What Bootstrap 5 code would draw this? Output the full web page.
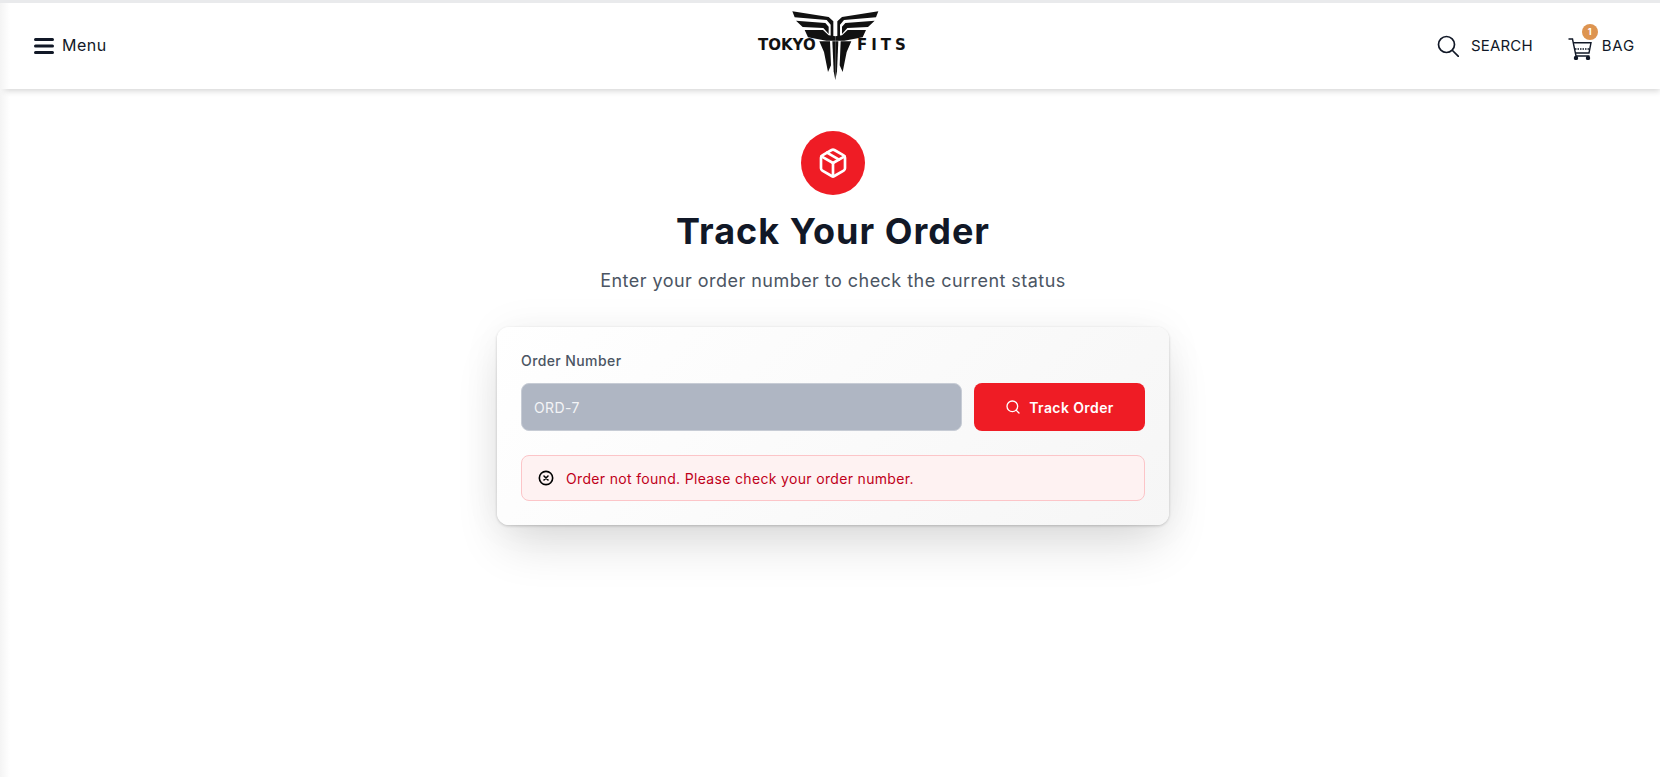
<!DOCTYPE html>
<html lang="en">
<head>
<meta charset="utf-8"/>
<meta content="width=device-width, initial-scale=1.0" name="viewport"/>
<title>Track Your Order</title>
<link href="https://cdn.jsdelivr.net/npm/bootstrap@5.3.0/dist/css/bootstrap.min.css" rel="stylesheet"/>
<style>
  body { font-family: Inter, "Open Sans", sans-serif; background: #fff; color: #111827; min-height: 777px; overflow: hidden; border-top: 3px solid #e9eaec; }
  body::before { content: ""; position: fixed; top: 3px; left: 0; bottom: 0; width: 10px; background: linear-gradient(to right, #f4f4f4, rgba(255,255,255,0)); z-index: 5; pointer-events: none; }
  .top-bar { height: 86px; padding: 0 25px 0 34px; background: #fff; box-shadow: 0 2px 6px rgba(0,0,0,.17); position: relative; }
  .top-side { width: 400px; }
  .top-link { font-size: 15px; letter-spacing: .15px; color: #111827; text-decoration: none; }
  .menu-link { font-size: 16px; letter-spacing: .5px; margin-top: -2px; }
  .bag-link { letter-spacing: .8px; }
  .cart-wrap { position: relative; width: 24px; height: 22px; margin: 0 10px 0 35px; }
  .cart-count { position: absolute; top: -11px; left: 14px; width: 16px; height: 16px; border-radius: 50%; background: #dd9450; color: #fff; font-size: 9px; font-weight: 700; line-height: 16px; text-align: center; }
  .logo-box { position: relative; width: 153px; height: 76px; }
  .logo-mark { position: absolute; top: 0; left: 30px; }
  .logo-word { position: absolute; top: 29px; font-family: "DejaVu Sans", sans-serif; font-weight: 700; font-size: 15px; line-height: 16px; color: #111; }
  .word-left { left: 0; }
  .word-right { left: 99px; letter-spacing: 4px; }
  .main-col { padding: 42px 0 0 6px; }
  .icon-disc { width: 64px; height: 64px; background: #ef1c25; }
  .page-title { font-size: 36px; font-weight: 700; line-height: 40px; letter-spacing: 1px; color: #111827; margin: 16px 0 0; }
  .page-sub { font-size: 18px; line-height: 28px; letter-spacing: .46px; color: #4b5563; margin: 16px 0 0; }
  .track-card { width: 672px; margin-top: 32px; padding: 24px; border-radius: 12px; background: linear-gradient(135deg, #fff, #f6f6f6); box-shadow: 0 25px 50px -8px rgba(0,0,0,.14), 0 0 40px rgba(0,0,0,.05), 0 1px 3px rgba(0,0,0,.2); }
  .field-label { font-size: 14px; line-height: 20px; letter-spacing: .4px; font-weight: 500; color: #4b5563; margin-bottom: 12px; display: block; }
  .track-row { gap: 12px; }
  .order-input, .order-input:disabled { height: 48px; min-width: 0; background: #afb6c3; border: 1px solid #c7ccd5; border-radius: 8px; color: #f3f4f6; font-size: 14px; letter-spacing: .4px; padding: 0 12px; }
  .btn-track, .btn-track:hover { width: 171px; height: 48px; background: #ef1c25; color: #fff; border: 0; border-radius: 8px; font-size: 14px; font-weight: 600; letter-spacing: .4px; }
  .not-found { height: 46px; margin-top: 24px; padding: 0 16px; gap: 12px; border: 1px solid #fcc5c8; border-radius: 8px; background: #fef2f2; color: #c0001a; font-size: 14px; letter-spacing: .33px; }
</style>
</head>
<body>
<header class="top-bar d-flex align-items-center justify-content-between">
  <div class="top-side d-flex align-items-center gap-2">
    <svg width="20" height="18" viewBox="0 0 20 18"><path d="M1.500 2.500h17M1.500 9h17M1.500 15.500h17" stroke="#111827" stroke-width="3" stroke-linecap="round"/></svg>
    <a class="top-link menu-link" href="#">Menu</a>
  </div>
  <div class="logo-box">
    <svg class="logo-mark" width="94" height="76" viewBox="0 0 282 228">
      <g id="wingHalf" fill="#111">
        <path d="M13 10L122 27 136 40V86L128 84V50L116 36 20 28Z"/>
        <path d="M24 38L112 45 122 56V78L106 60 44 57Z"/>
        <path d="M50 66L105 66 122 82 142 85V98H115L60 88Z"/>
        <path d="M94 100H126L129 172 120 192 108 132Z"/>
        <path d="M133 100H142V216L137 190Z"/>
      </g>
      <use href="#wingHalf" transform="translate(284,0) scale(-1,1)"/>
    </svg>
    <span class="logo-word word-left">TOKYO</span>
    <span class="logo-word word-right">FITS</span>
  </div>
  <div class="top-side d-flex align-items-center justify-content-end">
    <svg width="22" height="22" viewBox="0 0 22 22" fill="none" stroke="#111827" stroke-width="1.700" stroke-linecap="round"><circle cx="9.500" cy="9.500" r="8"/><path d="M15.500 15.500L21.500 21.500"/></svg>
    <a class="top-link ms-2 ps-1" href="#">SEARCH</a>
    <div class="cart-wrap">
      <svg width="24" height="22" viewBox="0 0 24 22" fill="none" stroke="#111827" stroke-width="1.400"><path d="M.5 1H4.500L8 18H21.500"/><path d="M5.500 4.700H23L21 15H7.500"/><path d="M7 11H21.500" stroke-dasharray="1.500 1"/><circle cx="8" cy="20" r="1.500" fill="#111827"/><circle cx="20" cy="20" r="1.500" fill="#111827"/></svg>
      <span class="cart-count">1</span>
    </div>
    <a class="top-link bag-link" href="#">BAG</a>
  </div>
</header>
<main class="main-col d-flex flex-column align-items-center text-center">
  <div class="icon-disc rounded-circle d-flex align-items-center justify-content-center">
    <svg width="32" height="32" viewBox="0 0 24 24" fill="none" stroke="#fff" stroke-width="2" stroke-linecap="round" stroke-linejoin="round"><path d="M21 8a2 2 0 0 0-1-1.730l-7-4a2 2 0 0 0-2 0l-7 4A2 2 0 0 0 3 8v8a2 2 0 0 0 1 1.730l7 4a2 2 0 0 0 2 0l7-4A2 2 0 0 0 21 16Z"/><path d="m3.300 7 8.700 5 8.700-5"/><path d="M12 22V12"/><path d="m7.500 4.270 9 5.150"/></svg>
  </div>
  <h1 class="page-title">Track Your Order</h1>
  <p class="page-sub">Enter your order number to check the current status</p>
  <form class="track-card text-start">
    <label class="field-label" for="orderNo">Order Number</label>
    <div class="d-flex track-row">
      <input class="form-control order-input flex-grow-1" id="orderNo" value="ORD-7" disabled/>
      <button class="btn btn-track flex-shrink-0 d-flex align-items-center justify-content-center gap-2" type="button">
        <svg width="16" height="16" viewBox="0 0 24 24" fill="none" stroke="#fff" stroke-width="2" stroke-linecap="round"><circle cx="11" cy="11" r="8"/><path d="m21 21-4.300-4.300"/></svg>
        Track Order
      </button>
    </div>
    <div class="not-found d-flex align-items-center">
      <svg width="16" height="16" viewBox="0 0 24 24" fill="none" stroke="#000" stroke-width="2.400" stroke-linecap="round"><circle cx="12" cy="12" r="10"/><path d="m15 9-6 6M9 9l6 6"/></svg>
      Order not found. Please check your order number.
    </div>
  </form>
</main>
</body>
</html>
